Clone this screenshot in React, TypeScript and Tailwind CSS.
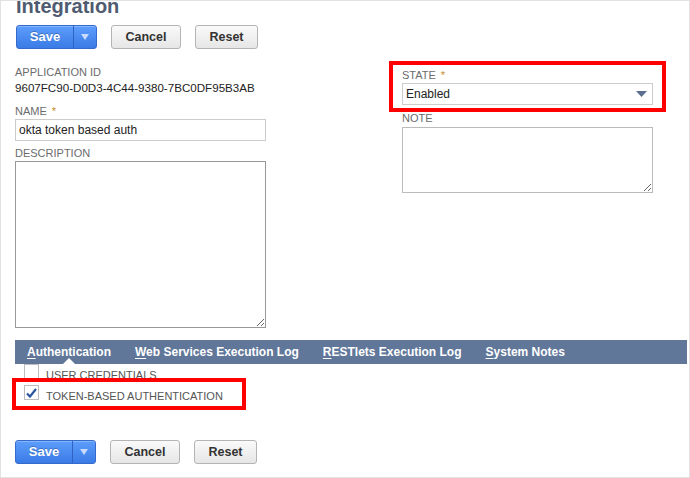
import React from "react";

function SaveButton() {
  return (
    <div className="flex h-[24px] w-[81px] rounded-[3px] border border-[#3569cc] bg-linear-to-b from-[#5d9dfc] to-[#3a7be6] shadow-[inset_0_1px_0_rgba(255,255,255,0.25)]">
      <span className="flex w-[56px] items-center justify-center text-[13px] font-bold text-white [text-shadow:0_-1px_0_rgba(0,0,0,0.25)]">
        Save
      </span>
      <span className="flex flex-1 items-center justify-center border-l border-[#2f62c2]">
        <svg width="8" height="6" viewBox="0 0 8 6">
          <path d="M0 0 L8 0 L4 6 Z" fill="#c9dafc" />
        </svg>
      </span>
    </div>
  );
}

function GrayButton({ label, w }: { label: string; w: string }) {
  return (
    <div
      className={`flex h-[24px] ${w} items-center justify-center rounded-[3px] border border-[#b4b4b4] bg-linear-to-b from-[#fafafa] to-[#e6e6e6] text-[12.5px] font-bold text-[#333]`}
    >
      {label}
    </div>
  );
}

function ButtonRow({ className }: { className: string }) {
  return (
    <div className={`flex items-center ${className}`}>
      <SaveButton />
      <div className="ml-[14px]">
        <GrayButton label="Cancel" w="w-[70px]" />
      </div>
      <div className="ml-[14px]">
        <GrayButton label="Reset" w="w-[63px]" />
      </div>
    </div>
  );
}

function Label({ text, req }: { text: string; req?: boolean }) {
  return (
    <div className="h-[13px] text-[11px] leading-[13px] text-[#6b6b6b]">
      {text}
      {req && <span className="ml-[5px] text-[#c98d1e]">*</span>}
    </div>
  );
}

function Tab({ first, rest, active }: { first: string; rest: string; active?: boolean }) {
  return (
    <div className="relative flex h-full items-center px-[12px] text-[12px] font-bold text-white">
      <span>
        <span className="underline underline-offset-2">{first}</span>
        {rest}
      </span>
      {active && (
        <span className="absolute bottom-0 left-1/2 h-0 w-0 -translate-x-1/2 border-x-[6px] border-b-[6px] border-x-transparent border-b-white" />
      )}
    </div>
  );
}

export default function App() {
  return (
    <div className="relative h-[478px] w-[690px] overflow-hidden border border-[#e2e2e2] bg-white font-['Liberation_Sans',Arial,sans-serif]">
      <div className="pl-[14px] pr-[2px]">
        <h1 className="mt-[-5px] ml-[1px] text-[20px] font-bold leading-[20px] text-[#4f5b70]">
          Integration
        </h1>
        <ButtonRow className="mt-[9px] ml-[1px]" />

        <div className="mt-[17px] flex">
          <div className="w-[251px]">
            <Label text="APPLICATION ID" />
            <div className="mt-[2px] text-[11.6px] leading-[14px] text-[#222]">
              9607FC90-D0D3-4C44-9380-7BC0DF95B3AB
            </div>
            <div className="mt-[10px]">
              <Label text="NAME" req />
            </div>
            <div className="mt-[1px] flex h-[22px] items-center border border-[#cccccc] px-[3px] text-[12px] text-[#222]">
              okta token based auth
            </div>
            <div className="mt-[6px]">
              <Label text="DESCRIPTION" />
            </div>
            <textarea className="mt-[1px] block h-[167px] w-[251px] border border-[#999] outline-none" />
          </div>

          <div className="ml-[136px] w-[251px] pt-[3px]">
            <Label text="STATE" req />
            <div className="mt-[1px] flex h-[22px] items-center justify-between border border-[#cccccc] pl-[3px] pr-[5px] text-[12px] text-[#222]">
              <span>Enabled</span>
              <svg width="11" height="6" viewBox="0 0 11 6">
                <path d="M0 0 L11 0 L5.5 6 Z" fill="#5a6f8f" />
              </svg>
            </div>
            <div className="mt-[7px]">
              <Label text="NOTE" />
            </div>
            <textarea className="mt-[2px] block h-[66px] w-[251px] border border-[#bbbbbb] outline-none" />
          </div>
        </div>

        <div className="relative z-10 mt-[12px] flex h-[24px] items-center bg-[#61779a]">
          <Tab first="A" rest="uthentication" active />
          <Tab first="W" rest="eb Services Execution Log" />
          <Tab first="R" rest="ESTlets Execution Log" />
          <Tab first="S" rest="ystem Notes" />
        </div>

        <div className="pl-[9px]">
          <div className="flex h-[15px] items-end">
            <span className="block h-[15px] w-[15px] border border-[#bdbdbd] bg-white" />
            <span className="ml-[7px] mb-[-2px] text-[11px] leading-[11px] text-[#555]">USER CREDENTIALS</span>
          </div>
          <div className="mt-[6px] flex h-[15px] items-end">
            <span className="flex h-[15px] w-[15px] items-center justify-center border border-[#bdbdbd] bg-white">
              <svg width="11" height="10" viewBox="0 0 11 10">
                <path d="M1 5.5 L4 8.5 L10 1" fill="none" stroke="#2b579f" strokeWidth="2.2" />
              </svg>
            </span>
            <span className="ml-[7px] mb-[-2px] text-[11px] leading-[11px] text-[#555]">TOKEN-BASED AUTHENTICATION</span>
          </div>
        </div>

        <ButtonRow className="mt-[40px]" />
      </div>

      <div className="absolute left-[388px] top-[60px] h-[51px] w-[277px] border-4 border-[#ff0000]" />
      <div className="absolute left-[11px] top-[377px] h-[32px] w-[234px] border-4 border-[#ff0000]" />
    </div>
  );
}
